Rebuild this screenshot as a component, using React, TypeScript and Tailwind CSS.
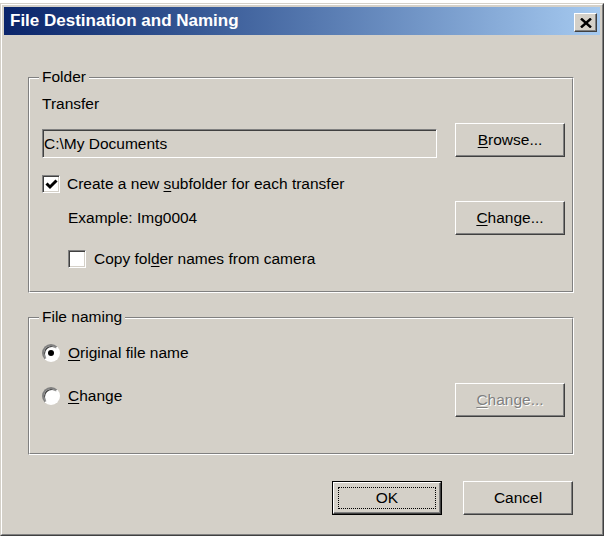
import React from "react";

const raised =
  "border border-t-white border-l-white border-b-[#404040] border-r-[#404040] shadow-[inset_-1px_-1px_0_#808080]";
const sunken =
  "border border-t-[#808080] border-l-[#808080] border-b-white border-r-white shadow-[inset_1px_1px_0_#404040,inset_-1px_-1px_0_#d4d0c8]";

function U({ children }: { children: React.ReactNode }) {
  return <span className="underline underline-offset-[2px] decoration-1">{children}</span>;
}

function Button({
  children,
  disabled,
}: {
  children: React.ReactNode;
  disabled?: boolean;
}) {
  return (
    <div
      className={`w-[110px] h-[34px] bg-[#d4d0c8] flex items-center justify-center ${raised} ${
        disabled ? "text-[#808080] [text-shadow:1px_1px_0_#fff]" : "text-black"
      }`}
    >
      <span className="leading-[18px]">{children}</span>
    </div>
  );
}

function Checkbox({ checked }: { checked?: boolean }) {
  return (
    <div className={`w-[18px] h-[18px] shrink-0 bg-white flex items-center justify-center ${sunken}`}>
      {checked && (
        <svg width="13" height="11" viewBox="0 0 13 11">
          <path d="M1.5 4.5 L5 8 L11.5 1.5" fill="none" stroke="#000" strokeWidth="3" />
        </svg>
      )}
    </div>
  );
}

function Radio({ checked }: { checked?: boolean }) {
  return (
    <div className="w-[18px] h-[18px] shrink-0 rounded-full bg-white border-2 border-t-[#808080] border-l-[#808080] border-b-white border-r-white shadow-[inset_1px_1px_0_#404040] flex items-center justify-center">
      {checked && <div className="w-[6px] h-[6px] rounded-full bg-black" />}
    </div>
  );
}

function GroupBox({
  label,
  height,
  children,
  innerClass,
}: {
  label: string;
  height: string;
  children: React.ReactNode;
  innerClass: string;
}) {
  return (
    <div
      className={`relative ml-[24px] w-[546px] ${height} border border-t-[#808080] border-l-[#808080] border-b-white border-r-white flex`}
    >
      <div className={`flex-1 border border-t-white border-l-white border-b-[#808080] border-r-[#808080] flex flex-col ${innerClass}`}>
        {children}
      </div>
      <span className="absolute -top-[10px] left-[10px] px-[3px] bg-[#d4d0c8] leading-[18px]">{label}</span>
    </div>
  );
}

export default function App() {
  return (
    <div className="w-[604px] h-[537px] bg-white pt-[3px] font-['Liberation_Sans',Arial,sans-serif] text-[15.5px] text-black">
      <div className="w-[604px] h-[533px] bg-[#d4d0c8] border border-t-[#d4d0c8] border-l-[#d4d0c8] border-b-[#404040] border-r-[#404040] flex">
        <div className="flex-1 border border-t-white border-l-white border-b-[#808080] border-r-[#808080] p-[2px] flex flex-col">
          {/* Title bar */}
          <div className="h-[28px] bg-linear-to-r from-[#0a246a] to-[#a6caf0] flex justify-between pl-[6px] pr-[3px]">
            <span className="text-white font-bold text-[17px] leading-[28px]">File Destination and Naming</span>
            <div className={`self-start mt-[6px] w-[23px] h-[19px] bg-[#d4d0c8] flex items-center justify-center ${raised}`}>
              <svg width="12" height="10" viewBox="0 0 12 10">
                <path d="M1 0.5 L11 9.5 M11 0.5 L1 9.5" stroke="#000" strokeWidth="2.4" fill="none" />
              </svg>
            </div>
          </div>

          {/* Folder group */}
          <div className="mt-[42px]">
            <GroupBox label="Folder" height="h-[216px]" innerClass="pl-[12px] pr-[7px] pt-[16px]">
              <span className="leading-[18px]">Transfer</span>
              <div className="mt-[10px] flex items-start justify-between">
                <div className={`mt-[6px] w-[395px] h-[29px] bg-[#d4d0c8] flex items-center pl-[1px] ${sunken}`}>
                  <span className="leading-[18px]">{"C:\\My Documents"}</span>
                </div>
                <Button>
                  <U>B</U>rowse...
                </Button>
              </div>
              <div className="mt-[17px] flex items-center h-[18px] gap-[7px]">
                <Checkbox checked />
                <span className="leading-[18px]">
                  Create a new <U>s</U>ubfolder for each transfer
                </span>
              </div>
              <div className="mt-[8px] flex items-center justify-between h-[34px] pl-[26px]">
                <span className="leading-[18px]">Example: Img0004</span>
                <Button>
                  <U>C</U>hange...
                </Button>
              </div>
              <div className="mt-[15px] flex items-center h-[18px] gap-[8px] pl-[26px]">
                <Checkbox />
                <span className="leading-[18px]">
                  Copy fol<U>d</U>er names from camera
                </span>
              </div>
            </GroupBox>
          </div>

          {/* File naming group */}
          <div className="mt-[24px]">
            <GroupBox label="File naming" height="h-[138px]" innerClass="pl-[12px] pr-[7px] pt-[25px]">
              <div className="flex items-center h-[18px] gap-[8px]">
                <Radio checked />
                <span className="leading-[18px]">
                  <U>O</U>riginal file name
                </span>
              </div>
              <div className="mt-[21px] flex items-start justify-between">
                <div className="mt-[4px] flex items-center h-[18px] gap-[8px]">
                  <Radio />
                  <span className="leading-[18px]">
                    <U>C</U>hange
                  </span>
                </div>
                <Button disabled>
                  <U>C</U>hange...
                </Button>
              </div>
            </GroupBox>
          </div>

          {/* Bottom buttons */}
          <div className="mt-[26px] flex justify-end gap-[21px] pr-[27px]">
            <div className="w-[110px] h-[34px] border border-black flex">
              <div className={`flex-1 bg-[#d4d0c8] flex items-center justify-center p-[4px] ${raised}`}>
                <div className="w-full h-full border border-dotted border-black flex items-center justify-center">
                  <span className="leading-[18px]">OK</span>
                </div>
              </div>
            </div>
            <Button>Cancel</Button>
          </div>
        </div>
      </div>
    </div>
  );
}
